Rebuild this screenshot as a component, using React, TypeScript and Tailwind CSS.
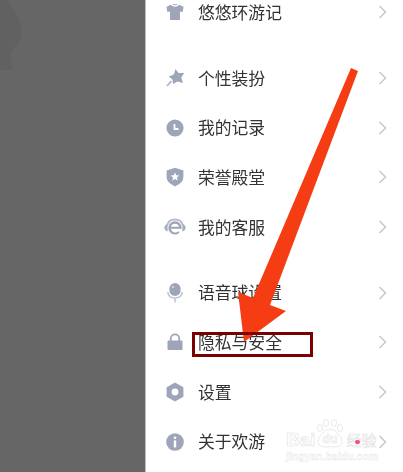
const C = "#9ea5b8";

const Shirt = () => (
  <svg width="20" height="20" viewBox="0 0 20 20"><path fill={C} d="M6.8 2.2 L13.2 2.2 Q10 4.4 6.8 2.2Z M5.5 2.8 Q10 6.8 14.5 2.8 L18.6 5 L17.6 10 L15 9.4 L15 17.2 Q15 18 14 18 L6 18 Q5 18 5 17.2 L5 9.4 L2.4 10 L1.4 5Z" /></svg>
);
const Wand = () => (
  <svg width="20" height="20" viewBox="0 0 20 20">
    <path fill={C} d="M10.5 1 L13.5 5 L19.2 5 L16.2 9.5 L18 15 L12.5 13.5 L8 16 L7.6 11.8 L3.8 8.5 L8.8 6.6Z" />
    <path stroke="#aeb4c4" strokeWidth="1.8" d="M6.5 13 L2 18" />
  </svg>
);
const Clock = () => (
  <svg width="20" height="20" viewBox="0 0 20 20">
    <circle cx="10" cy="10" r="8.6" fill={C} />
    <path d="M9.5 6 V11 H13.5" fill="none" stroke="#fff" strokeWidth="1.8" />
  </svg>
);
const Shield = () => (
  <svg width="20" height="20" viewBox="0 0 20 20">
    <path fill={C} d="M10 .8 L18.4 3.6 V10 Q18.4 15.8 10 19.4 Q1.6 15.8 1.6 10 V3.6Z" />
    <path fill="#fff" d="M10 5.5 L11.3 8.3 L14.3 8.6 L12 10.6 L12.7 13.5 L10 12 L7.3 13.5 L8 10.6 L5.7 8.6 L8.7 8.3Z" />
  </svg>
);
const Service = () => (
  <svg width="22" height="20" viewBox="0 0 22 20">
    <path fill="none" stroke="#b4bac9" strokeWidth="1.8" d="M3 8.5 Q4.5 2.5 11 2.5 Q17.5 2.5 19 8.5" />
    <path fill="#a6adbf" d="M3.6 7 Q.4 8 .4 10.8 Q.4 13.6 3.6 14.6Z M18.4 7 Q21.6 8 21.6 10.8 Q21.6 13.6 18.4 14.6Z" />
    <path fill={C} d="M11 4.2 a6.6 6.6 0 1 0 4.4 11.5 L14.2 14.2 a4.4 4.4 0 0 1 -7.4 -2.4 H17.6 A6.6 6.6 0 0 0 11 4.2Z M6.8 9.8 a4.4 4.4 0 0 1 8.4 0Z" fillRule="evenodd" />
  </svg>
);
const Mic = () => (
  <svg width="20" height="22" viewBox="0 0 20 22">
    <rect x="4.4" y="1" width="11.2" height="13" rx="5.6" fill={C} />
    <circle cx="8" cy="5" r="1.1" fill="#d5d8e0" />
    <path fill="none" stroke="#bfc4d1" strokeWidth="1.6" d="M2.8 10 Q3.4 16 10 16 Q16.6 16 17.2 10 M10 16 V20.5" />
  </svg>
);
const Lock = () => (
  <svg width="20" height="20" viewBox="0 0 20 20">
    <path fill="none" stroke={C} strokeWidth="1.8" d="M5.8 9 V6.5 a4.2 4.2 0 0 1 8.4 0 V9" />
    <rect x="2.5" y="8.5" width="15" height="9.5" rx="1" fill={C} />
  </svg>
);
const Gear = () => (
  <svg width="20" height="20" viewBox="0 0 20 20">
    <path fill={C} d="M10 .4 L18.4 5.2 V14.8 L10 19.6 L1.6 14.8 V5.2Z" />
    <circle cx="10" cy="10" r="3.4" fill="#fff" />
  </svg>
);
const Info = () => (
  <svg width="20" height="20" viewBox="0 0 20 20">
    <circle cx="10" cy="10" r="8.8" fill={C} />
    <circle cx="10" cy="5.8" r="1.3" fill="#fff" />
    <rect x="8.8" y="8.4" width="2.4" height="7" fill="#fff" />
  </svg>
);
const Chevron = () => (
  <svg width="9" height="14" viewBox="0 0 9 14">
    <path d="M1.5 1 L7.5 7 L1.5 13" fill="none" stroke="#c6cad2" strokeWidth="1.6" />
  </svg>
);

function Row({ icon, label, className = "" }: { icon: React.ReactNode; label: string; className?: string }) {
  return (
    <div className={`flex h-[49.7px] items-center pl-[17.5px] pr-[16px] ${className}`}>
      <div className="flex w-[22px] justify-center">{icon}</div>
      <span className="ml-[12.5px] flex-1 text-[16.8px] leading-none text-[#333]">{label}</span>
      <Chevron />
    </div>
  );
}

export default function App() {
  return (
    <div className="relative flex h-[472px] w-[403px] overflow-hidden bg-white [font-family:'Noto_Sans_CJK_SC','Noto_Sans',sans-serif]">
      <div className="relative w-[145px] shrink-0 bg-[#666666]">
        <svg className="absolute left-0 top-0" width="30" height="75" viewBox="0 0 30 75">
          <path fill="#616161" d="M0 0 H7 Q14 8 19 20 Q23 32 19 42 L11 52 Q9 62 13 70 H0Z" />
        </svg>
      </div>
      <div className="flex-1 border-l border-[#bdbdbd]">
        <div className="-mt-[12.5px] flex flex-col blur-[0.3px]">
          <Row icon={<Shirt />} label="悠悠环游记" />
          <Row className="mt-[16px]" icon={<Wand />} label="个性装扮" />
          <Row icon={<Clock />} label="我的记录" />
          <Row icon={<Shield />} label="荣誉殿堂" />
          <Row icon={<Service />} label="我的客服" />
          <Row className="mt-[16px]" icon={<Mic />} label="语音球设置" />
          <Row icon={<Lock />} label="隐私与安全" />
          <Row icon={<Gear />} label="设置" />
          <Row icon={<Info />} label="关于欢游" />
        </div>
      </div>

      {/* annotation: arrow */}
      <svg className="absolute left-0 top-0" width="403" height="472" viewBox="0 0 403 472">
        <polygon fill="#f63c12" points="351,68 358,71 270,305 286,311 244,342 238,292 253,298" />
      </svg>
      {/* annotation: box */}
      <div className="absolute left-[192px] top-[332px] h-[25px] w-[121px] border-[3px] border-[#7b0000]" />

      {/* watermark */}
      <svg className="absolute left-[315px] top-[419px]" width="30" height="32" viewBox="0 0 30 32" fill="#fff" stroke="#e6e6e6" strokeWidth="0.9">
        <ellipse cx="5" cy="9" rx="2.6" ry="3.4" />
        <ellipse cx="11" cy="4" rx="2.6" ry="3.4" />
        <ellipse cx="19" cy="4" rx="2.6" ry="3.4" />
        <ellipse cx="25" cy="9" rx="2.6" ry="3.4" />
        <path d="M15 10 Q20 10 24 16 Q29 22 26 26 Q23 29 15 27.5 Q7 29 4 26 Q1 22 6 16 Q10 10 15 10Z" />
      </svg>
      <div className="absolute left-[286px] top-[430px] w-[92px]">
        <div className="flex h-[18px] items-center leading-none text-white [-webkit-text-stroke:0.6px_#e4e4e4] [font-family:'Liberation_Sans',sans-serif]">
          <span className="text-[19px] font-bold">Bai</span>
          <span className="ml-[7px] w-[22px] text-[12px] font-bold">du</span>
          <span className="ml-[2px] text-[15px] [font-family:'Noto_Sans_CJK_SC',sans-serif]">经验</span>
        </div>
        <div className="mt-[3px] text-[10.5px] font-bold leading-none text-white [-webkit-text-stroke:0.4px_#e6e6e6] [font-family:'Liberation_Sans',sans-serif]">jingyan.baidu.com</div>
      </div>
      <div className="absolute left-[355px] top-[440px] h-[4px] w-[5px] rounded-full bg-[#f0508a]" />
    </div>
  );
}
